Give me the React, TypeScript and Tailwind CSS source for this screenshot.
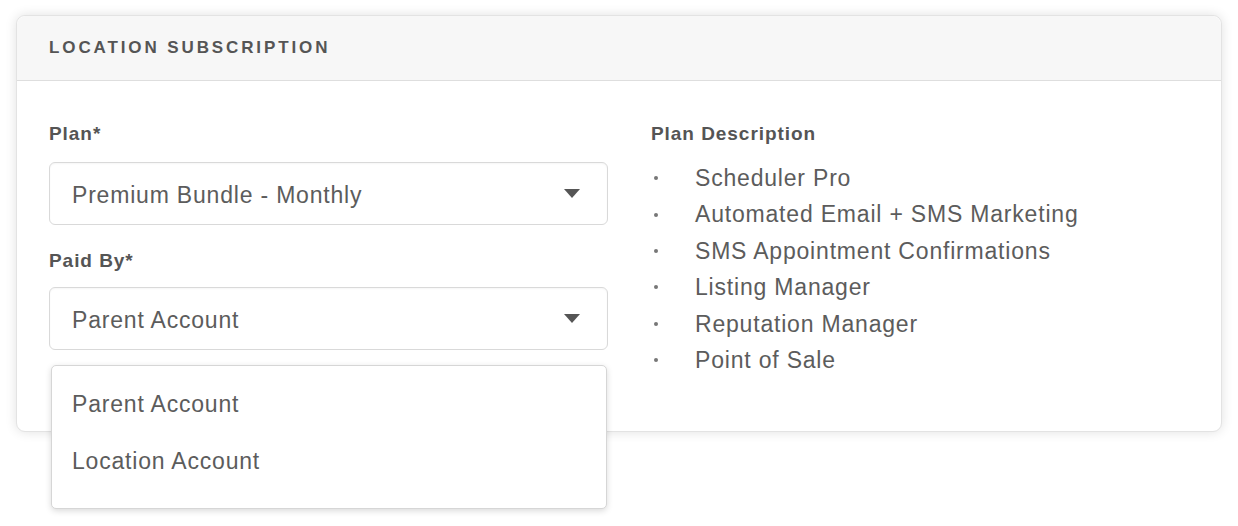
import React from "react";

const features = [
  "Scheduler Pro",
  "Automated Email + SMS Marketing",
  "SMS Appointment Confirmations",
  "Listing Manager",
  "Reputation Manager",
  "Point of Sale",
];

const Caret = () => (
  <svg width="16" height="9" viewBox="0 0 16 9" className="shrink-0">
    <path d="M0 0 H16 L8 9 Z" fill="#555" />
  </svg>
);

const SelectBox = ({ value }: { value: string }) => (
  <div className="flex h-[63px] w-full items-center justify-between rounded-[6px] border border-[#d9d9d9] bg-white pl-[22px] pr-[27px] shadow-[inset_0_1px_2px_rgba(0,0,0,0.04)]">
    <span className="pt-[3px] text-[23px] tracking-[0.035em] text-[#5c5c5c]">{value}</span>
    <Caret />
  </div>
);

export default function App() {
  return (
    <div className="min-h-[526px] bg-white pl-4 pr-4 pt-[15px] font-['Liberation_Sans',Arial,sans-serif]">
      <div className="w-[1206px] rounded-[9px] border border-[#e3e3e3] bg-white shadow-[0_0_12px_rgba(0,0,0,0.12)]">
        {/* header */}
        <div className="flex h-[65px] items-center rounded-t-[9px] border-b border-[#dedede] bg-[#f7f7f7] pl-8">
          <h2 className="text-[17px] font-bold tracking-[0.17em] text-[#555]">LOCATION SUBSCRIPTION</h2>
        </div>

        {/* body */}
        <div className="flex h-[350px] gap-[43px] pl-8 pt-[42px]">
          <div className="relative w-[559px]">
            <label className="block text-[19px] font-bold leading-[22px] tracking-[0.05em] text-[#555]">Plan*</label>
            <div className="mt-[17px]">
              <SelectBox value="Premium Bundle - Monthly" />
            </div>
            <label className="mt-[25px] block text-[19px] font-bold leading-[22px] tracking-[0.05em] text-[#555]">Paid By*</label>
            <div className="mt-[15px]">
              <SelectBox value="Parent Account" />
            </div>

            {/* open dropdown menu */}
            <div className="absolute left-[2px] top-[242px] z-10 h-[144px] w-[556px] rounded-[5px] border border-[#d6d6d6] bg-white pt-[10px] shadow-[0_2px_6px_rgba(0,0,0,0.15)]">
              <div className="flex h-[57px] items-center pl-[20px] text-[23px] tracking-[0.035em] text-[#5c5c5c]">Parent Account</div>
              <div className="flex h-[57px] items-center pl-[20px] text-[23px] tracking-[0.035em] text-[#5c5c5c]">Location Account</div>
            </div>
          </div>

          <div className="flex-1">
            <h3 className="text-[19px] font-bold leading-[22px] tracking-[0.05em] text-[#555]">Plan Description</h3>
            <ul className="mt-[15px]">
              {features.map((f) => (
                <li key={f} className="flex h-[36.4px] items-center text-[23px] tracking-[0.035em] text-[#5c5c5c]">
                  <span className="ml-[3px] mr-[37px] h-[4px] w-[4px] rounded-full bg-[#777]" />
                  {f}
                </li>
              ))}
            </ul>
          </div>
        </div>
      </div>
    </div>
  );
}
